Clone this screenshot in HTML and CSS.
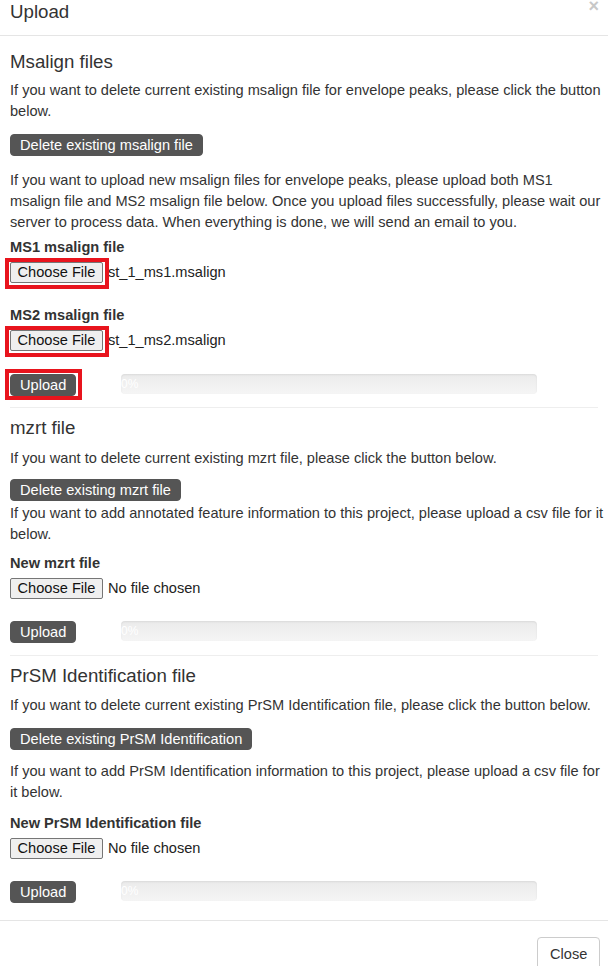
FILE: index.html
```html
<!DOCTYPE html>
<html>
<head>
<meta charset="utf-8">
<title>Upload</title>
<link rel="stylesheet" href="styles.css">
</head>
<body>
<div class="modal">
  <div class="modal-header">
    <h3 class="modal-title">Upload</h3>
    <span class="close">&times;</span>
  </div>
  <div class="modal-body">
    <section class="sec sec-msalign">
      <h4>Msalign files</h4>
      <p class="intro">If you want to delete current existing msalign file for envelope peaks, please click the button below.</p>
      <button class="btn-dark btn-delete">Delete existing msalign file</button>
      <p class="desc">If you want to upload new msalign files for envelope peaks, please upload both MS1 msalign file and MS2 msalign file below. Once you upload files successfully, please wait our server to process data. When everything is done, we will send an email to you.</p>
      <div class="field">
        <label>MS1 msalign file</label>
        <div class="file"><span class="file-btn marked">Choose File</span><span class="file-name">st_1_ms1.msalign</span></div>
      </div>
      <div class="field">
        <label>MS2 msalign file</label>
        <div class="file"><span class="file-btn marked">Choose File</span><span class="file-name">st_1_ms2.msalign</span></div>
      </div>
      <div class="upload-row">
        <div class="upload-col"><button class="btn-dark btn-upload marked-up">Upload</button></div>
        <div class="progress"><span class="progress-text">0%</span></div>
      </div>
    </section>
    <hr>
    <section class="sec sec-mzrt">
      <h4>mzrt file</h4>
      <p class="intro">If you want to delete current existing mzrt file, please click the button below.</p>
      <button class="btn-dark btn-delete">Delete existing mzrt file</button>
      <p class="desc">If you want to add annotated feature information to this project, please upload a csv file for it below.</p>
      <div class="field">
        <label>New mzrt file</label>
        <div class="file"><span class="file-btn">Choose File</span><span class="file-name">No file chosen</span></div>
      </div>
      <div class="upload-row">
        <div class="upload-col"><button class="btn-dark btn-upload">Upload</button></div>
        <div class="progress"><span class="progress-text">0%</span></div>
      </div>
    </section>
    <hr>
    <section class="sec sec-prsm">
      <h4>PrSM Identification file</h4>
      <p class="intro">If you want to delete current existing PrSM Identification file, please click the button below.</p>
      <button class="btn-dark btn-delete">Delete existing PrSM Identification</button>
      <p class="desc">If you want to add PrSM Identification information to this project, please upload a csv file for it below.</p>
      <div class="field">
        <label>New PrSM Identification file</label>
        <div class="file"><span class="file-btn">Choose File</span><span class="file-name">No file chosen</span></div>
      </div>
      <div class="upload-row">
        <div class="upload-col"><button class="btn-dark btn-upload">Upload</button></div>
        <div class="progress"><span class="progress-text">0%</span></div>
      </div>
    </section>
  </div>
  <div class="modal-footer">
    <button class="btn-close">Close</button>
  </div>
</div>
</body>
</html>
```
FILE: styles.css
```css
* { box-sizing: border-box; }
html, body { margin: 0; padding: 0; background: #fff; }
body {
  font-family: "Liberation Sans", Arial, Helvetica, sans-serif;
  font-size: 14.6px;
  line-height: 21px;
  color: #333;
}
.modal { width: 608px; }
.modal-header {
  height: 36px;
  border-bottom: 1px solid #e5e5e5;
  display: flex;
  justify-content: space-between;
  align-items: flex-start;
  padding: 0 10px 0 10px;
}
.modal-title {
  margin: 2px 0 0 0;
  font-size: 18.7px;
  font-weight: normal;
  line-height: 20px;
  color: #333;
}
.close {
  font-size: 18px;
  font-weight: bold;
  line-height: 12px;
  color: #c8c8c8;
  margin-right: -1px;
}
.modal-body { padding: 0 2px 17px 10px; }
.sec h4 {
  margin: 10px 0 0 0;
  font-size: 18.7px;
  font-weight: normal;
  line-height: 20px;
  color: #333;
}
.sec p { margin: 0; }
.sec .intro { margin-top: 10px; }
.btn-dark {
  display: inline-block;
  font-family: inherit;
  font-size: 14.6px;
  line-height: 20px;
  height: 22px;
  padding: 0 9px;
  background: #555;
  color: #fff;
  border: 1px solid #555;
  border-radius: 4px;
  cursor: pointer;
}
.btn-delete { margin-top: 10px; }
.sec .desc { margin-top: 2px; }
.field { margin-top: 8px; }
.field label {
  display: block;
  font-weight: bold;
  line-height: 20px;
}
.file {
  display: flex;
  align-items: center;
  margin-top: 5px;
  height: 21px;
}
.file-btn {
  position: relative;
  display: inline-block;
  width: 93px;
  height: 21px;
  line-height: 19px;
  text-align: center;
  font-size: 14.6px;
  color: #111;
  background: #efefef;
  border: 1px solid #767676;
  border-radius: 2px;
}
.file-name { margin-left: 5px; font-size: 14.6px; color: #222; }
.marked::after {
  content: "";
  position: absolute;
  left: -6px;
  top: -5px;
  right: -7px;
  bottom: -7px;
  border: 4px solid #e8141d;
}
.upload-row {
  display: flex;
  align-items: flex-start;
  margin-top: 23px;
}
.upload-col { width: 111px; display: flex; }
.btn-upload { margin: 0; position: relative; }
.marked-up::after {
  content: "";
  position: absolute;
  left: -6px;
  top: -6px;
  right: -7px;
  bottom: -5px;
  border: 4px solid #e8141d;
}
.progress {
  width: 416px;
  height: 20px;
  border-radius: 4px;
  background: linear-gradient(to bottom, #ebebeb, #f5f5f5);
  box-shadow: inset 0 1px 2px rgba(0,0,0,0.08);
  overflow: hidden;
}
.progress-text {
  display: block;
  font-size: 12px;
  line-height: 20px;
  color: #fff;
}
hr {
  border: 0;
  border-top: 1px solid #eee;
  margin: 11px 8px 0 0;
  height: 0;
}
/* section specific spacing */
.sec-msalign h4 { margin-top: 16px; }
.sec-msalign .intro { margin-top: 8px; }
.sec-msalign .btn-delete { margin-top: 12px; }
.sec-msalign .desc { margin-top: 14px; }
.sec-msalign .field { margin-top: 4px; }
.sec-msalign .field + .field { margin-top: 22px; }
.sec-msalign + hr { margin-top: 11px; }
.sec-mzrt .intro { margin-top: 10px; }
.sec-mzrt .desc { margin-top: 2px; }
.sec-mzrt .upload-row { margin-top: 22px; }
.sec-mzrt + hr { margin-top: 12px; }
.sec-prsm .intro { margin-top: 9px; }
.sec-prsm .btn-delete { margin-top: 12px; }
.sec-prsm .desc { margin-top: 11px; }
.sec-prsm .field { margin-top: 10px; }
.sec-prsm .upload-row { margin-top: 22px; }
.modal-footer {
  border-top: 1px solid #e5e5e5;
  padding: 16px 8px 0 0;
  display: flex;
  justify-content: flex-end;
}
.btn-close {
  font-family: inherit;
  font-size: 14.6px;
  line-height: 20px;
  padding: 6px 12px;
  width: 63px;
  height: 34px;
  background: #fff;
  color: #333;
  border: 1px solid #ccc;
  border-radius: 4px;
}
```
